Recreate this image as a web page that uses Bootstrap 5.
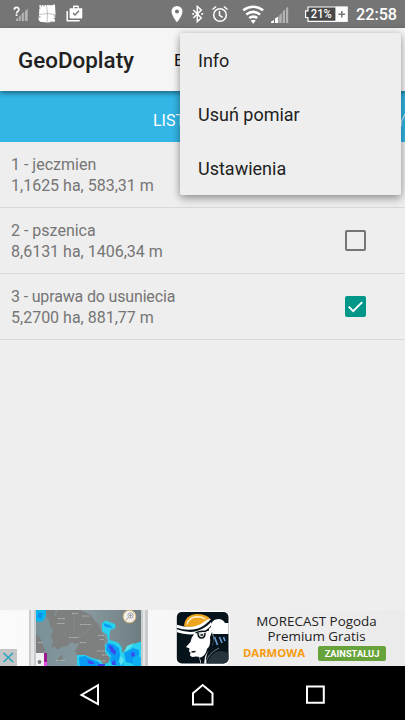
<!DOCTYPE html>
<html lang="pl">
<head>
<meta charset="utf-8">
<meta name="viewport" content="width=device-width, initial-scale=1">
<title>GeoDoplaty</title>
<link href="https://cdn.jsdelivr.net/npm/bootstrap@5.3.0/dist/css/bootstrap.min.css" rel="stylesheet">
<style>
body{font-family:Roboto,"Liberation Sans",sans-serif;background:#eee;color:#212121}
svg{display:block;flex:none}
.phone{width:405px;height:720px}
.status-bar{height:28px;background:#757575;color:#fff}
.clock{font-size:16.2px;font-weight:500;line-height:28px;width:41px;margin-left:8px;padding-top:1px;white-space:nowrap}
.app-bar{height:63px;background:#f5f5f5;z-index:2;box-shadow:0 2px 5px rgba(0,0,0,.45);padding-left:18px}
.app-title{font-size:22.4px;font-weight:500;width:156px;line-height:63px;padding-top:1px}
.app-action{font-size:17px;line-height:63px;padding-top:1px;color:#111}
.tab-strip{height:50.5px;background:#33b5e5;color:#fff;font-size:16px;padding:4px 0 0 153px;line-height:51px}
.tab-strip .next-tab{opacity:.6;margin-right:-1px}
.entry{height:66px;padding:0 39px 0 11px!important;background:#eee;color:#757575;font-size:16px;line-height:21px;border-color:#d8d8d8;border-width:0 0 1px!important}
.entry-text{padding-top:2px}
.entry-name.long{letter-spacing:-.16px}
.check{width:21px;height:21px;border:2px solid #757575;border-radius:2px}
.check.on{background:#009688;border-color:#009688}
.overflow-menu{left:180px;top:32.5px;width:220.5px;z-index:5;background:#eee;border-radius:2px;box-shadow:0 4px 8px rgba(0,0,0,.3),0 0 7px rgba(0,0,0,.16)}
.overflow-menu a{height:54px;padding:1px 18px 0;font-size:18px;color:#212121;text-decoration:none}
.ad{height:56px;background:linear-gradient(90deg,#fafafa,#f7f7f7 42%,#eee 56%,#ebebeb)}
.ad-text{width:173px}
.ad-line{font-family:"Open Sans","Noto Sans",sans-serif;font-size:13.4px;line-height:15px;height:15px;color:#222;padding-right:2px}
.ad-offer{margin-top:1.5px}
.ad-free{font-family:"Open Sans","Noto Sans",sans-serif;font-size:11.3px;font-weight:700;color:#f79a0e;line-height:14px;width:76px}
.ad-install{background:#67a33a;color:#fff;font-size:9.3px;font-weight:700;line-height:15px;width:68px;border-radius:2px;margin-left:7px}
.nav-keys{height:54px;background:#000}
</style>
<script src="https://cdn.jsdelivr.net/npm/bootstrap@5.3.0/dist/js/bootstrap.bundle.min.js"></script>
</head>
<body>
<div class="phone position-relative d-flex flex-column overflow-hidden">
  <header class="status-bar d-flex flex-shrink-0">
    <svg width="348" height="28" viewBox="0 0 348 28" fill="#fff">
      <!-- unknown signal -->
      <path d="M14.300 9.700c0-3 4.600-3 4.600-.3 0 2-2.300 2-2.300 4.200" fill="none" stroke="#fff" stroke-width="1.600"/><path d="M15.700 14.300h1.800V16h-1.800z"/>
      <path opacity=".45" d="M16 21v-2l2-1v3zM18.700 21v-4l2-2v6zM21.600 21v-7l2.300-2v9zM24.800 21V11.500l2.900-3V21z"/>
      <!-- field map -->
      <path d="M39.500 5l13 .300 1.500-1 1 .7.500 9-.8 8-7.700.5-7-.8-1.500-2 .5-5z"/><path d="M46.500 5l1 8-.5 9M39 14.500l8-1 8 1" fill="none" stroke="#aaa" stroke-width=".7"/><path d="M41.500 5v1.600M44 5v1.600M53.500 16h2M53.500 18.500h2M51 21v2M53 21v2M39 17h1.500M39 8h1.500" fill="none" stroke="#757575" stroke-width=".8"/>
      <!-- shopping bag -->
      <path d="M67.200 11v9.800h12.500" fill="none" stroke="#fff" stroke-width="1.500"/><path fill-rule="evenodd" d="M69.600 8.300h3.400V6.500q0-1 1-1h3.800q1 0 1 1v1.800h3.500v9.200q0 1-1 1H70.600q-1 0-1-1zM74.400 7v1.300h3V7z"/><path d="M73 13l2 2 4-4.200" fill="none" stroke="#757575" stroke-width="1.400"/>
      <!-- location -->
      <path fill-rule="evenodd" d="M177 6a5.500 5.500 0 0 0-5.500 5.500c0 4 5.500 10.800 5.500 10.800s5.500-6.800 5.500-10.800A5.500 5.500 0 0 0 177 6zm0 3.500a2 2 0 1 1 0 4 2 2 0 0 1 0-4z"/>
      <!-- bluetooth -->
      <path d="M193.300 10l8 8-4 3.500V6.500l4 3.500-8 8" fill="none" stroke="#fff" stroke-width="1.500"/><path d="M192.300 13h1.800v1.800h-1.800zM201.300 13h1.800v1.800h-1.800z"/>
      <!-- alarm -->
      <g fill="none" stroke="#fff" stroke-width="1.500"><circle cx="220" cy="15" r="6.300"/><path d="M219.500 11v4.300l3.200 2M212.500 9.500l3.600-3M227.500 9.500l-3.600-3"/></g>
      <!-- wifi -->
      <g fill="none" stroke="#fff" stroke-width="2.500"><path d="M243.200 10.300q10-7 20 0M246.300 14.400q6.900-5 13.800 0M249.200 18.100q4-3 8 0"/></g><path d="M250.600 20.500q2.600-1.500 5.200 0l-2.600 3.200z"/>
      <!-- mobile signal -->
      <path d="M271 23v-1.300l3-1.700v3zM275 23v-4.500l3.300-2V23z"/><path opacity=".45" d="M279.200 23v-7.500l2.500-2.500v10zM282.700 23V11.500l2.300-2V23zM286 23V8.500l2.200-2V23z"/>
      <!-- battery -->
      <path d="M308 7h28v14.300h-28v-3.800h-2.400v-6.600h2.400z" fill="#484848" stroke="#fff" stroke-width="1.200"/><path d="M336 6.400h11.800v15.500H336z"/><path d="M338.500 14.200h6.600M341.800 11v6.500" stroke="#757575" stroke-width="1.500"/>
      <text x="310.800" y="18.300" font-size="12" font-weight="500" textLength="21" lengthAdjust="spacingAndGlyphs">21%</text>
    </svg>
    <div class="clock">22:58</div>
  </header>

  <nav class="app-bar d-flex flex-shrink-0 position-relative">
    <div class="app-title">GeoDoplaty</div><div class="app-action">E</div>
  </nav>
  <div class="tab-strip d-flex flex-shrink-0 justify-content-between"><span>LIST</span><span class="next-tab">Y</span></div>

  <main class="flex-grow-1">
    <ul class="list-group list-group-flush">
      <li class="list-group-item entry d-flex align-items-center justify-content-between"><div class="entry-text"><div class="entry-name">1 - jeczmien</div><div>1,1625 ha, 583,31 m</div></div></li>
      <li class="list-group-item entry d-flex align-items-center justify-content-between"><div class="entry-text"><div class="entry-name">2 - pszenica</div><div>8,6131 ha, 1406,34 m</div></div><span class="check"></span></li>
      <li class="list-group-item entry d-flex align-items-center justify-content-between"><div class="entry-text"><div class="entry-name long">3 - uprawa do usuniecia</div><div>5,2700 ha, 881,77 m</div></div><span class="check on"><svg width="17" height="17" viewBox="0 0 17 17"><path d="M1.700 8.600l4.500 4.500 9-9" fill="none" stroke="#fff" stroke-width="2"/></svg></span></li>
    </ul>
  </main>

  <section class="ad d-flex flex-shrink-0">
    <svg width="176" height="56" viewBox="0 0 176 56">
      <defs><filter id="soft" x="-10%" y="-10%" width="120%" height="120%" color-interpolation-filters="sRGB"><feGaussianBlur stdDeviation=".7"/></filter><clipPath id="screen"><path d="M36 0h105v56H36z"/></clipPath>
      <linearGradient id="sea" x2="1" y2="0"><stop stop-color="#7a9199"/><stop offset=".5" stop-color="#87999e"/><stop offset="1" stop-color="#6e7c80"/></linearGradient></defs>
      <path d="M29 0h119v56H29z" fill="#c9cccf"/><path d="M31 0h3v56h-3zM143 0h2v56h-2z" fill="#e4e6e8"/>
      <g clip-path="url(#screen)">
        <path d="M36 0h105v56H36z" fill="url(#sea)"/>
        <path d="M58 0h22l5 2 6 3 4 6 4 4 3 8 3 6-1 7 3 4 3 8 0 4-5 3-6-2-4-2-10-1-8-5-2-4 3-6 2-2-5 1-3-2-5 4-6 1-3 3-4-4-3 3 2-7-2-6 2-6-2-7 3-6zM46 0h10l-2 5 2 7-3 8-3-4-1-6-4-5zM36 24l4 3 2 6 3 7-2 3h-7zM57 51l4-6 2 2-3 5z" fill="#7e7f7f"/>
        <path d="M76 28q8-2 17-13M74 4v18" fill="none" stroke="#929494" stroke-width=".6"/>
        <g filter="url(#soft)"><path d="M34-2h12v8l-3 5-5 1-4-2z" fill="#08b6ec"/><path d="M38 3h5l-2 6-4-2z" fill="#0893ee"/>
        <path d="M102 13l4-2.500 4 1.500 5 2 .5 4-5 2-1 5 0 5 4 1 5 2 3 4 1 6 5-5 6-4 9-3v27H77V45l8 0 7 3 8 2 3 4 5-1 2-5-5-6v-7l3-3-1-7-5-4z" fill="#28d2ee"/>
        <path d="M103 13l7 2 3 3-8-1zM107 33l6 1 6 4 1 7-2 9-6 1-2-4 1-5-5-6zM79 47l6-1 6 3 8 3 2 5H80zM124 43l9-5 6 2v8l-5 6-8-2z" fill="#0a9cf5"/>
        <path d="M116 51l5-2 3 7h-9zM133 48l5-3 3 3v8h-8z" fill="#10b0f4"/><path d="M127 36l7-3-4 5-6 4zM121 46l3 4-3 6-2-5z" fill="#5ae4ee"/>
        <path d="M108 35l4 1 4 6-1 3-4-3zM87 50l5 1 3 3h-6zM98 54h7v2h-7zM131 43l3-1 1 4-3 1zM112 52l3-2 1 5h-4z" fill="#3a48ee"/></g>
        <g stroke="#c2c6c6" stroke-width=".7" stroke-dasharray="2 .5"><path d="M58 8.500h7M57 13.500h8M80 14.500h11M82 6h7M69 27.500h9M80 32.500h6M98 25.500h6M100 29.500h4M97 41h9M102 45h6M56 50.500h9M38 32.500h5M72 3.500h6M98 51h8"/></g>
        <path d="M36 43h8v13h-8z" fill="#f0f0f0"/><path d="M44 43h3v9h-3z" fill="#9c168d"/><path d="M44 52h3v4h-3z" fill="#ed4dec"/><circle cx="39.500" cy="52" r="1.900" fill="#777"/>
      </g>
      <circle cx="129.500" cy="6.500" r="6.300" fill="#f1efed" stroke="#d9b76e" stroke-width="1"/><g fill="none" stroke="#a5a4a2"><circle cx="130.500" cy="5.500" r="2.600"/><path d="M128.500 7.500l-2.500 2.500M129 5.500h3M130.500 4v3"/></g>
      <path d="M0 39h17v17H0z" fill="#c3c5c6"/><path d="M3.500 43l9.500 9M13 43l-9.500 9" stroke="#24a5bf" stroke-width="1.500"/>
    </svg>
    <svg width="55" height="56" viewBox="176 0 55 56">
      <defs><clipPath id="tile"><rect x="176.800" y="2" width="51.700" height="51.500" rx="5"/></clipPath></defs>
      <rect x="175.300" y="1" width="54.700" height="54.500" rx="7" fill="#fff"/>
      <g clip-path="url(#tile)"><path d="M176 1h54v54h-54z" fill="#07131a"/>
      <path d="M184 16q1-11.500 13-12 9 0 13.500 5l-13 8q-7 2-13.500-1z" fill="#eda51d"/><path d="M187 14.500q2-7.500 10-7.700 5 0 8.500 2.200" fill="none" stroke="#fff0cb" stroke-width="1.400"/>
      <path d="M176 14.500q11 4 20 1.500 6-2 9-5 3-2.500 6-2-6 7-13 9.500-11 3-22-1z" fill="#fff"/><path d="M176 19q12 4.500 21 2 9-3 14-9l1 2.500q-6 7.500-15 9.500-11 1.500-21-2z" fill="#fff"/>
      <path d="M210 24q-3-5 1-7 0-7.500 7-8 5 0 7 4h5v11h-16z" fill="#fff"/>
      <path d="M194 24q-3 4-3.500 8l-4.500 5 3.500 1.500-.5 3 1.500 1-.5 3 2 1.500q5-1 7 0l2 8h6q-3-8 2-15l4-6 .5-8-2-5-6 0z" fill="#fff"/>
      <path d="M212 22q3 10-1 17-5 4-6 8l-1 7h-3q0-5-2-6 7-2 8-9 4-3 3-12z" fill="#07131a"/>
      <path d="M198 23q0 5 3.500 5t3.500-5" fill="#ddd" stroke="#07131a" stroke-width="1.500"/><path d="M195.500 23q4-2.500 11-1.500M191.500 42l4-.5M200.500 25h2.500" stroke="#07131a" stroke-width="1.400" fill="none"/>
      <path d="M214.500 27l3 8M219.500 27l2.500 6M223.500 27l1.500 4" stroke="#6b9bd2" stroke-width="1.700"/><path d="M207 55q1-9 9-13 8-3 14 3v10z" fill="#27343b"/><path d="M206 53q1-9 13-15" stroke="#aaa" fill="none" stroke-width=".7"/></g>
    </svg>
    <div class="ad-text d-flex flex-column">
      <div class="pt-1 text-center"><div class="ad-line">MORECAST Pogoda</div><div class="ad-line">Premium Gratis</div></div>
      <div class="d-flex ad-offer"><div class="ad-free ps-2 ms-1">DARMOWA</div><div class="ad-install text-center">ZAINSTALUJ</div></div>
    </div>
  </section>

  <footer class="nav-keys flex-shrink-0">
    <svg width="405" height="54" viewBox="0 0 405 54" fill="none" stroke="#fff" stroke-width="2"><path d="M98 19.200v18.900L81.500 28.900zM193 38.500V27.200l9.700-8.200 9.800 8.200v11.300zM307 20.500h16.800v16.300H307z"/></svg>
  </footer>

  <div class="overflow-menu position-absolute d-flex flex-column">
    <a href="#" class="d-flex align-items-center">Info</a><a href="#" class="d-flex align-items-center">Usuń pomiar</a><a href="#" class="d-flex align-items-center">Ustawienia</a>
  </div>
</div>
</body>
</html>
